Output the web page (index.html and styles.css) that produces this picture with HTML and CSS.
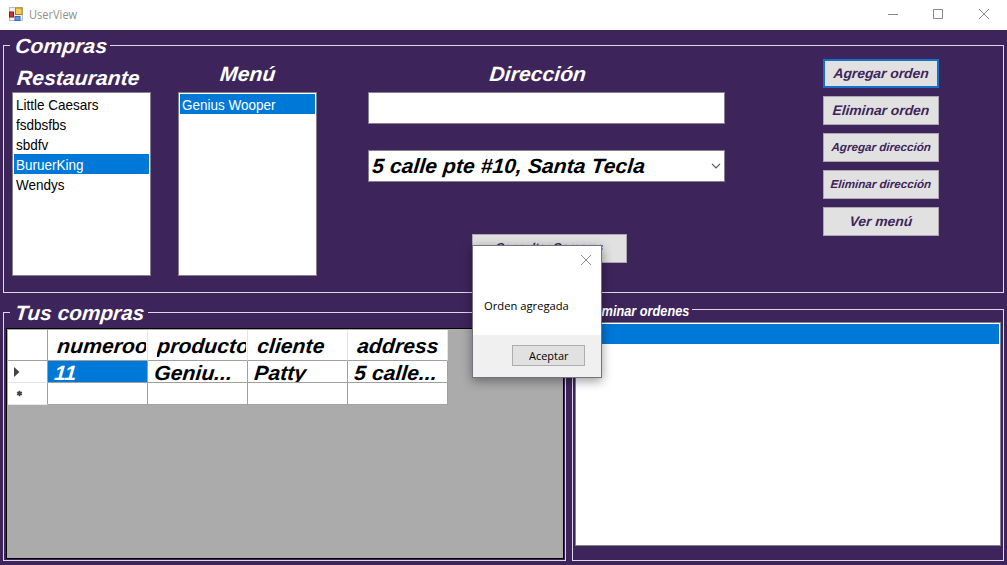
FILE: index.html
```html
<!DOCTYPE html>
<html lang="es">
<head>
<meta charset="utf-8">
<title>UserView</title>
<link rel="stylesheet" href="styles.css">
</head>
<body>
<div class="window">
  <header class="titlebar">
    <svg class="app-icon" width="14" height="14" viewBox="0 0 14 14">
      <rect x=".5" y=".5" width="13" height="13" fill="#eef0f4" stroke="#b9bcc6"/>
      <rect x=".5" y="5" width="4" height="5" fill="#d5332a" stroke="#8e1a14"/>
      <rect x="6.5" y="1" width="6.5" height="6.5" fill="#f8cf4a" stroke="#a98322"/>
      <rect x="6" y="9.5" width="5" height="4" fill="#5b95ea" stroke="#3c68b4"/>
    </svg>
    <span class="app-title">UserView</span>
    <svg class="controls" width="103" height="12" viewBox="0 0 103 12" fill="none" stroke="#888">
      <path d="M0 6.5H10M45.5 1.5H54.5V10.500H45.500ZM91 1L101 11M101 1L91 11"/>
    </svg>
  </header>

  <main class="form">
    <section class="group shopping">
      <h2 class="legend"><span class="wide">Compras</span></h2>
      <div class="col">
        <h3 class="label low"><span class="wide">Restaurante</span></h3>
        <ul class="list">
          <li><span>Little Caesars</span></li>
          <li><span>fsdbsfbs</span></li>
          <li><span>sbdfv</span></li>
          <li class="selected"><span>BuruerKing</span></li>
          <li><span>Wendys</span></li>
        </ul>
      </div>
      <div class="col menu">
        <h3 class="label"><span class="wide">Menú</span></h3>
        <ul class="list"><li class="selected"><span>Genius Wooper</span></li></ul>
      </div>
      <div class="address">
        <h3 class="label"><span class="wide">Dirección</span></h3>
        <div class="field"></div>
        <div class="field combo">
          <span class="wide">5 calle pte #10, Santa Tecla</span>
          <svg width="10" height="6" viewBox="0 0 10 6" fill="none" stroke="#555" stroke-width="1.2"><path d="M1 .8L5 4.800L9 .8"/></svg>
        </div>
        <button class="btn small consult"><span>Consultar Compras</span></button>
      </div>
      <div class="actions">
        <button class="btn focused"><span>Agregar orden</span></button>
        <button class="btn"><span>Eliminar orden</span></button>
        <button class="btn small"><span>Agregar dirección</span></button>
        <button class="btn small"><span>Eliminar dirección</span></button>
        <button class="btn"><span>Ver menú</span></button>
      </div>
    </section>

    <div class="lower">
      <section class="group purchases">
        <h2 class="legend"><span class="wide">Tus compras</span></h2>
        <div class="grid-box">
          <div class="grid">
            <div class="head corner"></div>
            <div class="head"><span class="clip"><span class="wide">numeroorden</span></span></div>
            <div class="head"><span class="clip"><span class="wide">producto</span></span></div>
            <div class="head"><span class="wide">cliente</span></div>
            <div class="head last"><span class="wide">address</span></div>
            <div class="row-head soft"><svg width="6" height="10" viewBox="0 0 6 10"><path d="M0 0L5.500 5L0 10Z" fill="#444"/></svg></div>
            <div class="cell selected"><span class="wide">11</span></div>
            <div class="cell"><span class="wide">Geniu...</span></div>
            <div class="cell"><span class="wide">Patty</span></div>
            <div class="cell"><span class="wide">5 calle...</span></div>
            <div class="row-head new"><svg width="7" height="7" viewBox="0 0 7 7" stroke="#444" stroke-width="1.300"><path d="M3.500 .8V6.200M1 2L6 5M6 2L1 5"/><circle cx="3.500" cy="3.500" r="1.500" fill="#444"/></svg></div>
            <div class="cell"></div>
            <div class="cell"></div>
            <div class="cell"></div>
            <div class="cell"></div>
          </div>
        </div>
      </section>
      <section class="group removal">
        <h2 class="legend"><span>Eliminar ordenes</span></h2>
        <ul class="list"><li class="selected"></li></ul>
      </section>
    </div>
  </main>

  <div class="dialog" role="dialog">
    <svg class="dialog-close" width="12" height="12" viewBox="0 0 12 12" stroke="#8a8a8a"><path d="M1 1L11 11M11 1L1 11"/></svg>
    <p class="message"><span>Orden agregada</span></p>
    <footer class="dialog-footer"><button class="accept"><span>Aceptar</span></button></footer>
  </div>
</div>
</body>
</html>
```

FILE: styles.css
```css
* { box-sizing: border-box; }
body { margin: 0; }
h2, h3, p, ul { margin: 0; padding: 0; list-style: none; font-weight: inherit; }
button { margin: 0; padding: 0; font: inherit; }

.window {
  position: relative;
  width: 1007px;
  height: 565px;
  overflow: hidden;
  background: #3d255b;
  font-family: "Liberation Sans", Arial, sans-serif;
}
.titlebar {
  display: flex;
  align-items: center;
  height: 30px;
  padding: 0 16px 2px 9px;
  background: #fff;
}
.app-title {
  margin-left: 6px;
  padding-top: 2px;
  font: 12px/16px "Open Sans", sans-serif;
  color: #8f8f8f;
  transform: scaleX(.92);
  transform-origin: left;
}
.app-title + .controls { margin-left: auto; }

.form { padding: 15px 3px 4px; }
.group { position: relative; border: 1px solid #e0d8e8; }
.legend {
  position: absolute;
  top: -12px;
  left: 6px;
  height: 23px;
  padding-left: 5px;
  background: #3d255b;
  color: #fff;
  font: italic bold 20.6px/23px "Liberation Sans", Arial, sans-serif;
  white-space: nowrap;
}
.wide {
  display: inline-block;
  white-space: nowrap;
  transform: scaleX(1.03) skewX(-5deg);
  transform-origin: left 70%;
}
.label {
  height: 33px;
  padding-top: 2px;
  color: #fff;
  text-align: center;
  font: italic bold 20.6px/25px "Liberation Sans", Arial, sans-serif;
}
.label .wide { transform-origin: center; }
.label.low { padding-top: 6px; padding-right: 5px; }

.shopping { display: flex; width: 1001px; height: 248px; padding: 13px 0 0 8px; }
.shopping > .legend { width: 100px; }
.col { width: 139px; }
.col.menu { margin-left: 27px; }
.list {
  height: 184px;
  padding: 1px;
  background: #fff;
  border: 1px solid #85808b;
  color: #000;
}
.list li { height: 20px; padding-left: 2px; font-size: 15px; line-height: 22px; }
.list span { display: inline-block; white-space: nowrap; transform: scaleX(.9); transform-origin: left; }
.list .selected { background: #0078d7; color: #fff; }

.address { width: 357px; margin-left: 51px; }
.address .label { padding-right: 17px; }
.field { height: 32px; background: #fff; border: 1px solid #85808b; }
.combo {
  display: flex;
  align-items: center;
  justify-content: space-between;
  margin-top: 26px;
  padding: 0 3px 0 3px;
  font: italic bold 20.6px/23px "Liberation Sans", Arial, sans-serif;
}
.combo .wide { margin-bottom: 2px; }

.btn {
  display: block;
  width: 116px;
  height: 29px;
  border: 1px solid #ada6b3;
  background: #e1e1e1;
  color: #3d255b;
  font: italic bold 13.7px/26px "Liberation Sans", Arial, sans-serif;
}
.btn span { display: inline-block; white-space: nowrap; transform: scaleX(1.01) skewX(-5deg); }
.btn.small { font-size: 11.5px; line-height: 25px; }
.btn.focused { border: 2px solid #1472c8; line-height: 24px; }
.btn.consult { width: 155px; margin: 52px 0 0 104px; padding-bottom: 2px; line-height: 23px; }
.actions { display: grid; align-content: start; gap: 8px; margin-left: 98px; }

.lower { display: flex; align-items: flex-end; justify-content: space-between; width: 1001px; height: 268px; }
.purchases { width: 563px; height: 249px; padding: 15px 1px 0 2px; }
.purchases > .legend { width: 138px; padding-left: 5px; }
.purchases > .legend .wide { transform: scaleX(1.01) skewX(-5deg); }
.grid-box { height: 231px; padding: 1px 0 0 1px; background: #ababab; border: 1px solid #000; }
.grid {
  display: grid;
  grid-template-columns: 40px repeat(4, 100px);
  grid-template-rows: 31px 22px 22px;
  width: 440px;
  font: italic bold 20.6px/23px "Liberation Sans", Arial, sans-serif;
}
.grid > div { overflow: hidden; background: #fff; border-right: 1px solid #a0a0a0; border-bottom: 1px solid #a0a0a0; }
.grid > .head { padding: 4px 0 0 9px; border-right-color: #e5e5e5; }
.grid > .head.corner { border-right-color: #a0a0a0; }
.clip { display: block; width: 89px; overflow: hidden; }
.grid > .cell { padding-left: 6px; }
.grid > .cell.selected { background: #0078d7; color: #fff; }
.grid > .row-head { display: flex; align-items: center; padding-left: 6px; }
.grid > .row-head.soft { border-bottom-color: #e5e5e5; }
.grid > .row-head.new { padding-left: 8px; border-bottom-color: #e5e5e5; }

.removal { width: 432px; height: 252px; padding: 12px 2px 0; }
.removal > .legend {
  top: -9px;
  width: 113px;
  height: 20px;
  padding-left: 7px;
  font-size: 14px;
  line-height: 21px;
}
.removal > .legend span { display: inline-block; transform: scaleX(.91); transform-origin: left; }
.removal .list { height: 224px; }

.dialog {
  position: absolute;
  top: 245px;
  left: 472px;
  display: flex;
  flex-direction: column;
  width: 130px;
  height: 133px;
  background: #fff;
  border: 1px solid #77717d;
  box-shadow: 0 3px 10px rgba(0, 0, 0, .4);
  font: 11.5px/16px "Open Sans", sans-serif;
  color: #000;
}
.dialog-close { align-self: flex-end; margin: 8px 9px 0 0; }
.message { margin: 32px 0 0 11px; white-space: nowrap; }
.message span { display: inline-block; transform: scaleX(.975); transform-origin: left; }
.dialog-footer { display: flex; justify-content: flex-end; height: 42px; margin-top: auto; padding: 10px 16px 0 0; background: #f0f0f0; }
.accept { width: 73px; height: 21px; background: #e1e1e1; border: 1px solid #adadad; color: #000; line-height: 19px; }
.accept span { display: inline-block; transform: scaleX(.95); }
```
